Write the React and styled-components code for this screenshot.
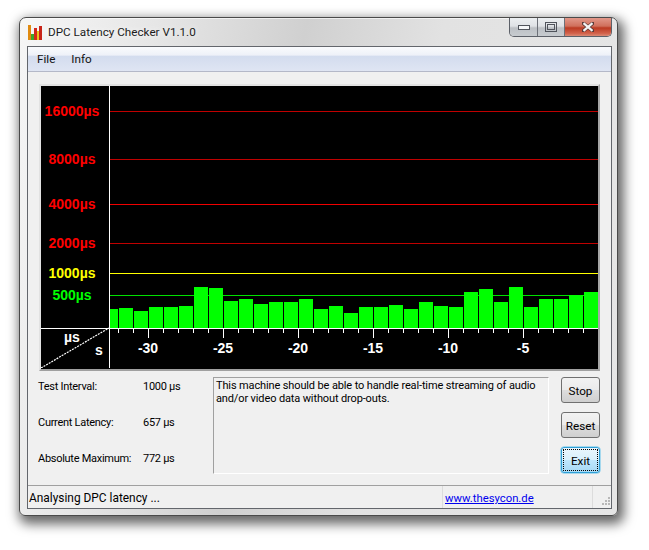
import React from 'react'
import styled, { createGlobalStyle } from 'styled-components'

const GlobalStyle = createGlobalStyle`
    html, body {
        margin: 0;
        background: #ffffff;
    }
    body {
        font-family: Roboto, "Noto Sans", sans-serif;
        font-size: 11px;
        color: #000000;
    }
    * {
        box-sizing: border-box;
    }
`

const Page = styled.div`
    width: 649px;
    height: 550px;
    padding: 17px 31px 34px 19px;
    overflow: hidden;
`

const Window = styled.div`
    width: 599px;
    height: 499px;
    display: flex;
    flex-direction: column;
    padding: 0 5px 6px 7px;
    border: 1px solid #4a4a4a;
    border-radius: 7px 7px 6px 6px;
    background: linear-gradient(100deg, #f6f6f6 0%, #e6e6e6 20%, #d0d0d0 42%, #e2e2e2 62%, #e6e6e6 100%);
    box-shadow: 3px 5px 12px 3px rgba(0, 0, 0, 0.6), 0 1px 0 rgba(255, 255, 255, 0.6) inset;
`

const TitleBar = styled.div`
    height: 28px;
    flex: none;
    display: flex;
    align-items: flex-start;
`

const TitleIcon = styled.svg`
    width: 16px;
    height: 16px;
    margin: 7px 5px 0 0;
    flex: none;
`

const TitleText = styled.div`
    flex: 1;
    margin-top: 5px;
    font-size: 11.7px;
    line-height: 18px;
    color: #1c1c1c;
    text-shadow: 0 0 6px #ffffff;
`

const CaptionGroup = styled.div`
    display: flex;
    height: 19px;
    flex: none;
    border: 1px solid #5c6068;
    border-top: none;
    border-radius: 0 0 5px 5px;
    overflow: hidden;
`

const CaptionButton = styled.div`
    width: ${(p) => p.$width}px;
    display: flex;
    align-items: center;
    justify-content: center;
    border-left: ${(p) => (p.$first ? 'none' : '1px solid #6c7078')};
    background: ${(p) =>
        p.$close
            ? 'linear-gradient(#e2988a 0%, #d0705c 45%, #bb3a22 55%, #d2614a 85%, #da8a76 100%)'
            : 'linear-gradient(#ebeef1 0%, #dfe2e6 45%, #bcc0c5 55%, #c7cbcf 100%)'};
`

const Client = styled.div`
    flex: 1;
    display: flex;
    flex-direction: column;
    border: 1px solid #63666c;
    background: #f0f0f0;
    min-height: 0;
`

const MenuBar = styled.div`
    height: 25px;
    flex: none;
    display: flex;
    align-items: center;
    gap: 16px;
    padding: 0 9px;
    font-size: 11.7px;
    border-bottom: 1px solid #b4b8c8;
    background: linear-gradient(#fafbfd 0%, #eef1f8 34%, #d3dcee 38%, #dfe5f3 100%);
`

const MenuItem = styled.span`
    color: #111111;
`

const ChartFrame = styled.div`
    margin: 12px 11px 0 11px;
    height: 287px;
    flex: none;
    border-style: solid;
    border-width: 2px;
    border-color: #e2e2e2 #a6a6a6 #a0a0a0 #e2e2e2;
    background: #000000;
`

const ChartSvg = styled.svg`
    display: block;
    width: 557px;
    height: 282px;
    font-family: "Liberation Sans", Arial, sans-serif;
    font-weight: 700;
    font-size: 14px;
`

const InfoPanel = styled.div`
    flex: 1;
    display: flex;
    padding: 6px 11px 11px 10px;
    min-height: 0;
`

const Readings = styled.div`
    width: 175px;
    flex: none;
    display: grid;
    grid-template-rows: repeat(3, 36px);
    align-content: start;
    padding-top: 2px;
`

const Reading = styled.div`
    display: grid;
    grid-template-columns: 105px 1fr;
    align-items: start;
    line-height: 16px;
    letter-spacing: -0.28px;
    white-space: nowrap;
`

const Message = styled.div`
    width: 336px;
    flex: none;
    padding: 1px 2px;
    line-height: 13px;
    letter-spacing: -0.13px;
    border-style: solid;
    border-width: 1px;
    border-color: #a0a0a0 #ffffff #ffffff #a0a0a0;
`

const Buttons = styled.div`
    display: flex;
    flex-direction: column;
    gap: 9px;
    margin-left: 12px;
`

const Button = styled.button`
    width: 39px;
    height: 26px;
    padding: 1px 0 0;
    font: inherit;
    font-size: 11.7px;
    color: #000000;
    border-radius: 3px;
    border: 1px solid ${(p) => (p.$focused ? '#2f9fd6' : '#707070')};
    background: ${(p) =>
        p.$focused
            ? 'linear-gradient(#eaf6fd 0%, #d9f0fc 48%, #bee6fd 52%, #a7d9f5 100%)'
            : 'linear-gradient(#f2f2f2 0%, #ebebeb 48%, #dddddd 52%, #cfcfcf 100%)'};
    outline: ${(p) => (p.$focused ? '1px dotted #000000' : 'none')};
    outline-offset: -3px;
    box-shadow: ${(p) => (p.$focused ? '0 0 0 0.5px #5cc0ea' : 'none')};
`

const StatusBar = styled.div`
    height: 23px;
    flex: none;
    display: flex;
    align-items: stretch;
    border-top: 1px solid #a0a0a0;
    line-height: 25px;
`

const StatusText = styled.div`
    width: 414px;
    padding-left: 1px;
    font-size: 11.9px;
`

const StatusLink = styled.a`
    width: 150px;
    padding-left: 2px;
    font-size: 11.3px;
    color: #0000ee;
    text-decoration: underline;
    border-left: 1px solid #dcdcdc;
`

const StatusGrip = styled.div`
    flex: 1;
    border-left: 1px solid #dcdcdc;
    display: flex;
    align-items: flex-end;
    justify-content: flex-end;
`

const LEVELS = [
    { label: '16000µs', y: 25, text: '#ff0000', line: '#c00000' },
    { label: '8000µs', y: 73, text: '#ff0000', line: '#c00000' },
    { label: '4000µs', y: 118, text: '#ff0000', line: '#f00000' },
    { label: '2000µs', y: 157, text: '#ff0000', line: '#c00000' },
    { label: '1000µs', y: 187, text: '#ffff00', line: '#ffff00' },
    { label: '500µs', y: 209, text: '#00ff00', line: '#00e000' },
]

// top edge of each bar, in window pixels, oldest first
const BAR_TOPS = [
    308, 311, 307, 307, 306, 287, 288, 301, 299, 304, 302, 302, 299, 309, 306, 313, 307, 307, 305, 309, 302, 306, 307,
    292, 289, 302, 287, 307, 299, 299, 295, 292,
]

const AXIS_LABELS = ['-30', '-25', '-20', '-15', '-10', '-5']

const Chart = () => {
    const axisY = 242
    const ticks = Array.from({ length: 32 }, (_, i) => 77 + i * 15)

    return (
        <ChartSvg viewBox="0 0 557 282">
            {LEVELS.map((level) => (
                <g key={level.label}>
                    <rect x="68" y={level.y} width="489" height="1" fill={level.line} />
                    <text x="31" y={level.y + 5} textAnchor="middle" fill={level.text}>
                        {level.label}
                    </text>
                </g>
            ))}
            <rect x="68" y={223} width="9" height={axisY - 223} fill="#00ff00" />
            {BAR_TOPS.map((top, i) => (
                <rect
                    key={i}
                    x={78 + i * 15}
                    y={top - 86}
                    width={i === 31 ? 15 : 14}
                    height={axisY - (top - 86)}
                    fill="#00ff00"
                />
            ))}
            <rect x="68" y="0" width="1" height="282" fill="#ffffff" />
            <rect x="0" y={axisY} width="557" height="1" fill="#ffffff" />
            {ticks.map((x, i) => (
                <rect key={x} x={x} y={axisY} width="1" height={(i + 3) % 5 === 0 ? 10 : 5} fill="#ffffff" />
            ))}
            {AXIS_LABELS.map((label, i) => (
                <text key={label} x={107 + i * 75} y={267} textAnchor="middle" fill="#ffffff">
                    {label}
                </text>
            ))}
            <line x1="0" y1="282" x2="68" y2="242" stroke="#ffffff" strokeWidth="1.2" strokeDasharray="2 1" />
            <text x="23" y="256" fill="#ffffff">
                µs
            </text>
            <text x="54" y="269" fill="#ffffff">
                s
            </text>
        </ChartSvg>
    )
}

const App = () => (
    <Page>
        <GlobalStyle />
        <Window>
            <TitleBar>
                <TitleIcon viewBox="0 0 16 16">
                    <rect x="1" y="0" width="3" height="15" fill="#e08a10" />
                    <rect x="4" y="9" width="3" height="6" fill="#3aa82a" />
                    <rect x="7" y="3" width="3" height="12" fill="#d42818" />
                    <rect x="10" y="6" width="2" height="9" fill="#e8c020" />
                    <rect x="12" y="1" width="3" height="14" fill="#c82418" />
                </TitleIcon>
                <TitleText>DPC Latency Checker V1.1.0</TitleText>
                <CaptionGroup>
                    <CaptionButton $first $width={27}>
                        <svg width="12" height="5" viewBox="0 0 12 5">
                            <rect x="0.5" y="0.5" width="11" height="4" fill="#f4f6f8" stroke="#50545c" />
                        </svg>
                    </CaptionButton>
                    <CaptionButton $width={27}>
                        <svg width="12" height="10" viewBox="0 0 12 10">
                            <rect x="0.5" y="0.5" width="11" height="9" fill="none" stroke="#50545c" />
                            <rect x="2.5" y="2.5" width="7" height="5" fill="none" stroke="#50545c" />
                        </svg>
                    </CaptionButton>
                    <CaptionButton $close $width={47}>
                        <svg width="12" height="10" viewBox="0 0 12 10">
                            <path
                                d="M1 1 L11 9 M11 1 L1 9"
                                stroke="#5a3a38"
                                strokeWidth="3.6"
                                strokeLinecap="square"
                            />
                            <path d="M1.5 1.2 L10.5 8.8 M10.5 1.2 L1.5 8.8" stroke="#f4f4f4" strokeWidth="2.2" />
                        </svg>
                    </CaptionButton>
                </CaptionGroup>
            </TitleBar>
            <Client>
                <MenuBar>
                    <MenuItem>File</MenuItem>
                    <MenuItem>Info</MenuItem>
                </MenuBar>
                <ChartFrame>
                    <Chart />
                </ChartFrame>
                <InfoPanel>
                    <Readings>
                        <Reading>
                            <span>Test Interval:</span>
                            <span>1000 µs</span>
                        </Reading>
                        <Reading>
                            <span>Current Latency:</span>
                            <span>657 µs</span>
                        </Reading>
                        <Reading>
                            <span>Absolute Maximum:</span>
                            <span>772 µs</span>
                        </Reading>
                    </Readings>
                    <Message>
                        This machine should be able to handle real-time streaming of audio and/or video data without
                        drop-outs.
                    </Message>
                    <Buttons>
                        <Button>Stop</Button>
                        <Button>Reset</Button>
                        <Button $focused>Exit</Button>
                    </Buttons>
                </InfoPanel>
                <StatusBar>
                    <StatusText>Analysing DPC latency ...</StatusText>
                    <StatusLink href="#">www.thesycon.de</StatusLink>
                    <StatusGrip>
                        <svg width="11" height="11" viewBox="0 0 11 11">
                            <g fill="#b8b8b8">
                                <rect x="8" y="0" width="2" height="2" />
                                <rect x="5" y="3" width="2" height="2" />
                                <rect x="8" y="3" width="2" height="2" />
                                <rect x="2" y="6" width="2" height="2" />
                                <rect x="5" y="6" width="2" height="2" />
                                <rect x="8" y="6" width="2" height="2" />
                            </g>
                        </svg>
                    </StatusGrip>
                </StatusBar>
            </Client>
        </Window>
    </Page>
)

export default App
